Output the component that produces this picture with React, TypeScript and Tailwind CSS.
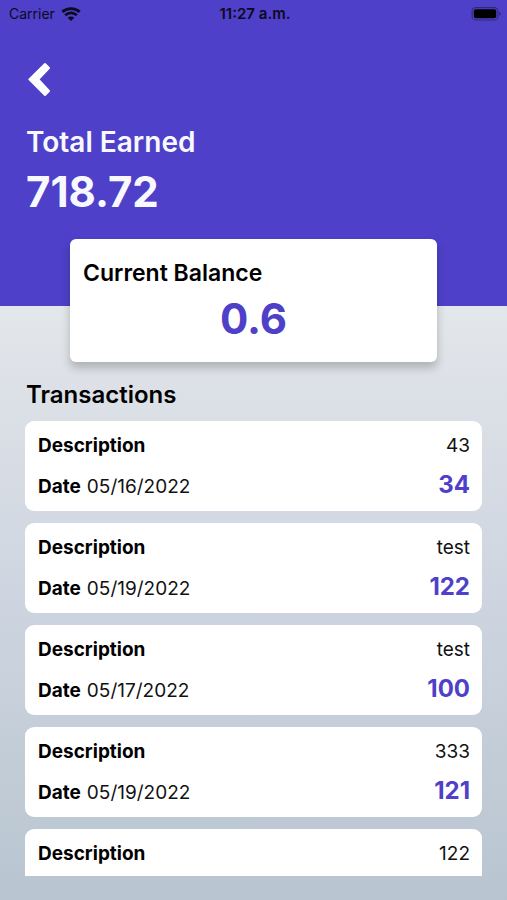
type Transaction = { id: number; description: string; date: string; amount: string };

const transactions: Transaction[] = [
  { id: 1, description: "43", date: "05/16/2022", amount: "34" },
  { id: 2, description: "test", date: "05/19/2022", amount: "122" },
  { id: 3, description: "test", date: "05/17/2022", amount: "100" },
  { id: 4, description: "333", date: "05/19/2022", amount: "121" },
  { id: 5, description: "122", date: "05/19/2022", amount: "122" },
];

function WifiIcon() {
  return (
    <svg width="20" height="14" viewBox="0 0 20 14" fill="none" stroke="currentColor" aria-hidden="true">
      <path d="M1.3 4.9C6.2 0.4 13.8 0.4 18.7 4.9" strokeWidth="2.8" />
      <path d="M4.2 8.2C7.6 5.1 12.4 5.1 15.8 8.2" strokeWidth="2.6" />
      <path d="M6.7 10.7C8.6 9 11.4 9 13.3 10.7L10 13.9Z" fill="currentColor" stroke="none" />
    </svg>
  );
}

function BatteryIcon() {
  return (
    <svg width="30" height="14" viewBox="0 0 30 14" aria-hidden="true">
      <rect x="1.1" y="0.6" width="25.8" height="12.4" rx="3.6" fill="none" stroke="#000" strokeOpacity="0.38" strokeWidth="1.1" />
      <rect x="2.8" y="2.3" width="22.4" height="9" rx="2" fill="#000" />
      <path d="M28.2 4.6C30 5.4 30 8.2 28.2 9Z" fill="#000" fillOpacity="0.42" />
    </svg>
  );
}

function StatusBar() {
  return (
    <div className="grid h-7 grid-cols-3 items-center pr-[6px] pl-[9px] text-sm text-[#0c0a20]">
      <div className="flex items-center gap-[6px]">
        <span>Carrier</span>
        <WifiIcon />
      </div>
      <span className="text-center text-[15px] font-semibold whitespace-nowrap">11:27 a.m.</span>
      <div className="flex justify-end">
        <BatteryIcon />
      </div>
    </div>
  );
}

function TransactionCard({ item }: { item: Transaction }) {
  return (
    <li className="flex h-[90px] shrink-0 flex-col justify-between rounded-[9px] bg-white py-2 pr-3 pl-[13px] text-[19px] text-[#111]">
      <div className="flex justify-between leading-[34px]">
        <span className="font-bold text-black">Description</span>
        <span>{item.description}</span>
      </div>
      <div className="flex items-start justify-between leading-8">
        <span>
          <span className="mr-[6px] font-bold text-black">Date</span>
          {item.date}
        </span>
        <span className="text-2xl leading-7 font-bold text-[#4e40c8]">{item.amount}</span>
      </div>
    </li>
  );
}

export default function App() {
  return (
    <div className="flex h-screen flex-col overflow-hidden bg-linear-to-b from-[#e3e6ea] from-34% via-[#ced5e0] via-66% to-[#b8c5d0] font-['Inter','Liberation_Sans',sans-serif] text-black">
      <header className="h-[306px] shrink-0 bg-[#4e40c8] text-[#f8f8ff]">
        <StatusBar />
        <div className="px-[26px] pt-8">
          <button type="button" aria-label="Back" className="block h-10 text-white">
            <svg width="26" height="40" viewBox="0 0 26 40" fill="currentColor" stroke="currentColor" strokeWidth="2" strokeLinejoin="round" aria-hidden="true">
              <path d="M19 4L23 8L12.3 19.4L23 31L19 35L3.3 19.4Z" />
            </svg>
          </button>
          <h1 className="mt-6 text-[28px] leading-9 font-semibold">Total Earned</h1>
          <p className="mt-2 text-[42px] leading-[48px] font-bold">718.72</p>
        </div>
      </header>
      <section className="mx-[70px] -mt-[67px] h-[123px] shrink-0 rounded-md bg-white px-[13px] pt-4 shadow-[0_6px_10px_rgba(0,0,0,0.22)]">
        <h2 className="text-[23px] leading-9 font-semibold">Current Balance</h2>
        <p className="mt-1 text-center text-[42px] leading-[48px] font-bold text-[#4e40c8]">0.6</p>
      </section>
      <main className="flex min-h-0 flex-1 flex-col px-[25px] pt-4 pb-6">
        <h2 className="mb-[9px] pl-px text-2xl leading-[34px] font-semibold">Transactions</h2>
        <ul className="flex min-h-0 flex-1 flex-col gap-3 overflow-y-auto [scrollbar-width:none]">
          {transactions.map((item) => (
            <TransactionCard key={item.id} item={item} />
          ))}
        </ul>
      </main>
    </div>
  );
}
